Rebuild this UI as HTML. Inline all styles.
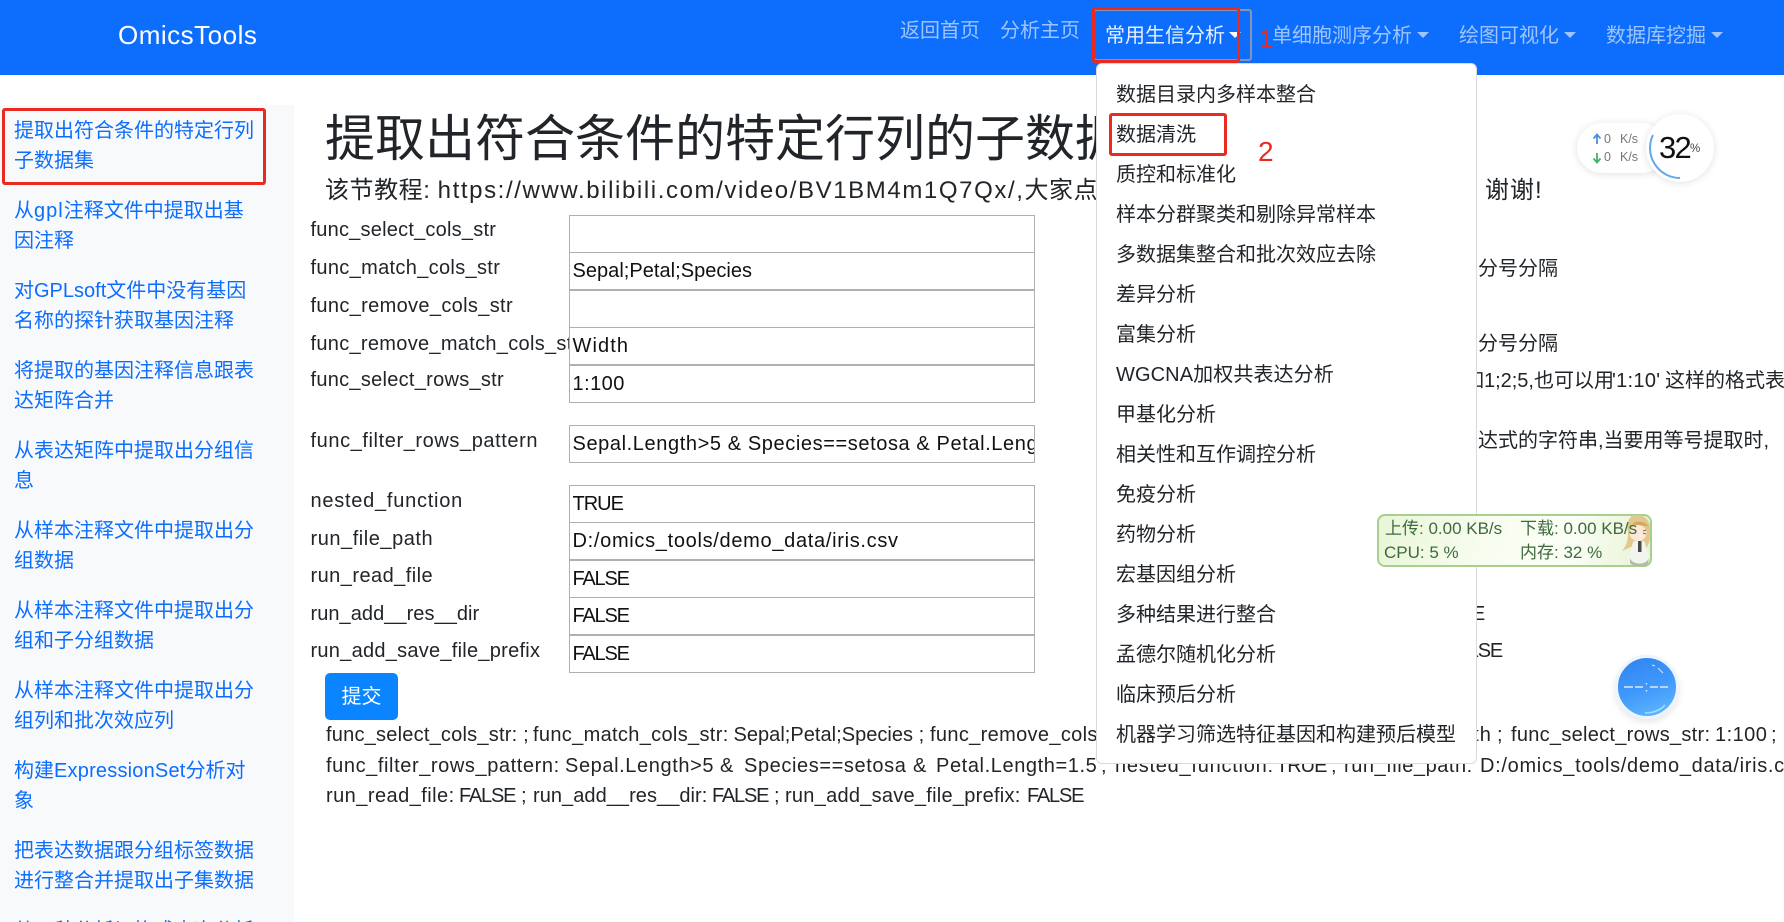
<!DOCTYPE html>
<html lang="zh-CN">
<head>
<meta charset="utf-8">
<title>OmicsTools</title>
<style>
html,body{margin:0;padding:0;width:1784px;height:922px;overflow:hidden;background:#fff}
body{position:relative;font-family:"Liberation Sans","Noto Sans CJK SC",sans-serif;font-size:20px;color:#212529}
.t{position:absolute;white-space:nowrap;height:30px;line-height:30px}
#nav{position:absolute;left:0;top:0;width:1784px;height:75px;background:#0d6efd}
.n{color:#9fc5fe}
.car{position:absolute;width:0;height:0;border-left:6px solid transparent;border-right:6px solid transparent;border-top:6px solid #9fc5fe;top:32px}
#side{position:absolute;left:0;top:105px;width:294px;height:817px;background:#f8f9fa}
.s{color:#0d6efd;left:14px}
.l{left:310.5px;color:#212529}
.v{position:absolute;box-sizing:border-box;left:569px;width:466px;height:38px;border:1px solid #b0b0b0;background:#fff;padding-left:2.5px;line-height:37px;overflow:hidden;white-space:nowrap;color:#111}
#dd{position:absolute;left:1096px;top:63px;width:381px;height:701px;box-sizing:border-box;background:#fff;border:1px solid #d8d9db;border-radius:6px}
.d{left:1116px}
.red{position:absolute;box-sizing:border-box;border:3px solid #ea2a20;border-radius:3px}
</style>
</head>
<body>
<div id="nav"></div>
<div class="t" style="left:118px;top:20px;color:#fff;font-size:26px;letter-spacing:.5px">OmicsTools</div>
<div class="t n" style="left:900px;top:16px">返回首页</div>
<div class="t n" style="left:1000px;top:16px">分析主页</div>
<div style="position:absolute;left:1093px;top:9px;width:159px;height:52px;box-sizing:border-box;border:2px solid #8496b4;border-radius:3px"></div>
<div class="t" style="left:1105px;top:21px;color:#e6f0ff">常用生信分析</div>
<div class="car" style="left:1229px;border-top-color:#fff"></div>
<div class="t n" style="left:1272px;top:21px">单细胞测序分析</div>
<div class="car" style="left:1417px"></div>
<div class="t n" style="left:1459px;top:21px">绘图可视化</div>
<div class="car" style="left:1564px"></div>
<div class="t n" style="left:1606px;top:21px">数据库挖掘</div>
<div class="car" style="left:1711px"></div>

<div id="side"></div>
<div class="t s" style="top:116px">提取出符合条件的特定行列</div>
<div class="t s" style="top:146px">子数据集</div>
<div class="t s" style="top:196px">从<span style="letter-spacing:1px">gpl</span>注释文件中提取出基</div>
<div class="t s" style="top:226px">因注释</div>
<div class="t s" style="top:276px">对GPLsoft文件中没有基因</div>
<div class="t s" style="top:306px">名称的探针获取基因注释</div>
<div class="t s" style="top:356px">将提取的基因注释信息跟表</div>
<div class="t s" style="top:386px">达矩阵合并</div>
<div class="t s" style="top:436px">从表达矩阵中提取出分组信</div>
<div class="t s" style="top:466px">息</div>
<div class="t s" style="top:516px">从样本注释文件中提取出分</div>
<div class="t s" style="top:546px">组数据</div>
<div class="t s" style="top:596px">从样本注释文件中提取出分</div>
<div class="t s" style="top:626px">组和子分组数据</div>
<div class="t s" style="top:676px">从样本注释文件中提取出分</div>
<div class="t s" style="top:706px">组列和批次效应列</div>
<div class="t s" style="top:756px">构建<span style="letter-spacing:.2px">ExpressionSet</span>分析对</div>
<div class="t s" style="top:786px">象</div>
<div class="t s" style="top:836px">把表达数据跟分组标签数据</div>
<div class="t s" style="top:866px">进行整合并提取出子集数据</div>
<div class="t s" style="top:916px">从一种分析切换成本次分析</div>
<div class="red" style="left:2px;top:108px;width:264px;height:77px"></div>

<div class="t" style="left:325px;top:102px;height:74px;line-height:74px;font-size:50px;color:#212529">提取出符合条件的特定行列的子数据集</div>
<div class="t" style="left:325px;top:176px;font-size:24px;letter-spacing:.55px">该节教程: <span style="letter-spacing:1.6px">https://www.bilibili.com/video/BV1BM4m1Q7Qx/,</span>大家点赞</div>
<div class="t" style="left:1485px;top:176px;font-size:24px;letter-spacing:1px">谢谢!</div>

<div class="t l" style="top:215px;letter-spacing:.22px">func_select_cols_str</div>
<div class="t l" style="top:253px;letter-spacing:.33px">func_match_cols_str</div>
<div class="t l" style="top:291px;letter-spacing:.34px">func_remove_cols_str</div>
<div class="t l" style="top:329px;width:258px;overflow:hidden;letter-spacing:.3px">func_remove_match_cols_str</div>
<div class="t l" style="top:365px;letter-spacing:.28px">func_select_rows_str</div>
<div class="t l" style="top:426px;letter-spacing:.59px">func_filter_rows_pattern</div>
<div class="t l" style="top:486px;letter-spacing:.75px">nested_function</div>
<div class="t l" style="top:524px;letter-spacing:.54px">run_file_path</div>
<div class="t l" style="top:561px;letter-spacing:.45px">run_read_file</div>
<div class="t l" style="top:599px;letter-spacing:.05px">run_add__res__dir</div>
<div class="t l" style="top:636px;letter-spacing:.26px">run_add_save_file_prefix</div>

<div class="v" style="top:215px"></div>
<div class="v" style="top:252px;letter-spacing:.03px">Sepal;Petal;Species</div>
<div class="v" style="top:290px"></div>
<div class="v" style="top:327px;letter-spacing:1.1px">Width</div>
<div class="v" style="top:365px;letter-spacing:.45px">1:100</div>
<div class="v" style="top:425px;letter-spacing:.6px">Sepal.Length&gt;5 &amp; Species==setosa &amp; Petal.Length=1.5</div>
<div class="v" style="top:485px;letter-spacing:-1px">TRUE</div>
<div class="v" style="top:522px;letter-spacing:.69px">D:/omics_tools/demo_data/iris.csv</div>
<div class="v" style="top:560px;letter-spacing:-1.2px">FALSE</div>
<div class="v" style="top:597px;letter-spacing:-1.2px">FALSE</div>
<div class="v" style="top:635px;letter-spacing:-1.2px">FALSE</div>

<div style="position:absolute;left:325px;top:673px;width:73px;height:47px;background:#0a84ff;border-radius:5px;color:#fff;text-align:center;line-height:49px">提交</div>

<!-- result line 1 -->
<div class="t" style="left:326px;top:720px;letter-spacing:.22px">func_select_cols_str: ;</div>
<div class="t" style="left:533px;top:720px;letter-spacing:.33px">func_match_cols_str:</div>
<div class="t" style="left:733.500px;top:720px;letter-spacing:.03px">Sepal;Petal;Species ;</div>
<div class="t" style="left:930px;top:720px;letter-spacing:.34px">func_remove_cols_str: ;</div>
<div class="t" style="right:292px;top:720px;letter-spacing:1.1px">Width</div>
<div class="t" style="left:1497px;top:720px">;</div>
<div class="t" style="left:1511px;top:720px;letter-spacing:.28px">func_select_rows_str:</div>
<div class="t" style="left:1715px;top:720px;letter-spacing:.45px">1:100</div>
<div class="t" style="left:1771px;top:720px">;</div>
<!-- result line 2 -->
<div class="t" style="left:326px;top:751px;letter-spacing:.59px">func_filter_rows_pattern:</div>
<div class="t" style="left:565px;top:751px;letter-spacing:.6px">Sepal.Length&gt;5</div>
<div class="t" style="left:720px;top:751px">&amp;</div>
<div class="t" style="left:744px;top:751px;letter-spacing:.6px">Species==setosa</div>
<div class="t" style="left:913px;top:751px">&amp;</div>
<div class="t" style="left:936px;top:751px;letter-spacing:.6px">Petal.Length=1.5</div>
<div class="t" style="left:1101px;top:751px">;</div>
<div class="t" style="left:1115px;top:751px;letter-spacing:.75px">nested_function:</div>
<div class="t" style="left:1276px;top:751px;letter-spacing:-1px">TRUE</div>
<div class="t" style="left:1331px;top:751px">;</div>
<div class="t" style="left:1344px;top:751px;letter-spacing:.54px">run_file_path:</div>
<div class="t" style="left:1480px;top:751px;letter-spacing:.69px">D:/omics_tools/demo_data/iris.csv ;</div>
<!-- result line 3 -->
<div class="t" style="left:326px;top:781px;letter-spacing:.45px">run_read_file:</div>
<div class="t" style="left:459px;top:781px;letter-spacing:-1.2px">FALSE</div>
<div class="t" style="left:521px;top:781px">;</div>
<div class="t" style="left:533px;top:781px;letter-spacing:.05px">run_add__res__dir:</div>
<div class="t" style="left:712px;top:781px;letter-spacing:-1.2px">FALSE</div>
<div class="t" style="left:774px;top:781px">;</div>
<div class="t" style="left:785px;top:781px;letter-spacing:.26px">run_add_save_file_prefix:</div>
<div class="t" style="left:1027px;top:781px;letter-spacing:-1.2px">FALSE</div>

<!-- right column help text (partly hidden by dropdown) -->
<div class="t" style="left:1478px;top:254px">分号分隔</div>
<div class="t" style="left:1478px;top:329px">分号分隔</div>
<div class="t" style="right:250px;top:366px">如1;2;5,</div>
<div class="t" style="left:1534px;top:366px">也可以用</div>
<div class="t" style="left:1612px;top:366px;letter-spacing:.3px">'1:10'</div>
<div class="t" style="left:1665px;top:366px">这样的格式表示</div>
<div class="t" style="left:1458px;top:426px">表达式的字符串,当要用等号提取时,</div>
<div class="t" style="right:300px;top:599px;letter-spacing:-1.2px">FALSE</div>
<div class="t" style="right:282px;top:636px;letter-spacing:-1.2px">FALSE</div>

<div id="dd"></div>
<div class="t d" style="top:80px">数据目录内多样本整合</div>
<div class="t d" style="top:120px">数据清洗</div>
<div class="t d" style="top:160px">质控和标准化</div>
<div class="t d" style="top:200px">样本分群聚类和剔除异常样本</div>
<div class="t d" style="top:240px">多数据集整合和批次效应去除</div>
<div class="t d" style="top:280px">差异分析</div>
<div class="t d" style="top:320px">富集分析</div>
<div class="t d" style="top:360px;letter-spacing:.1px">WGCNA加权共表达分析</div>
<div class="t d" style="top:400px">甲基化分析</div>
<div class="t d" style="top:440px">相关性和互作调控分析</div>
<div class="t d" style="top:480px">免疫分析</div>
<div class="t d" style="top:520px">药物分析</div>
<div class="t d" style="top:560px">宏基因组分析</div>
<div class="t d" style="top:600px">多种结果进行整合</div>
<div class="t d" style="top:640px">孟德尔随机化分析</div>
<div class="t d" style="top:680px">临床预后分析</div>
<div class="t d" style="top:720px">机器学习筛选特征基因和构建预后模型</div>

<div class="red" style="left:1092px;top:7px;width:148px;height:56px"></div>
<div class="red" style="left:1109px;top:113px;width:118px;height:43px"></div>
<div class="t" style="left:1259px;top:24px;color:#ea2a20;font-size:26px">1</div>
<div class="t" style="left:1258px;top:137px;color:#ea2a20;font-size:28px">2</div>

<!-- speed widget -->
<div style="position:absolute;left:1577px;top:123px;width:90px;height:50px;border-radius:25px;background:#fff;box-shadow:0 1px 8px rgba(0,0,0,.12)"></div>
<svg style="position:absolute;left:1591px;top:132px" width="12" height="32" viewBox="0 0 12 32">
<path d="M6 12V3M2.500 6.500L6 2.500L9.500 6.500" fill="none" stroke="#4a90e2" stroke-width="1.800"/>
<path d="M6 21V30M2.500 26.500L6 30.500L9.500 26.500" fill="none" stroke="#3fb56a" stroke-width="1.800"/>
</svg>
<div class="t" style="left:1604px;top:130px;height:18px;line-height:18px;font-size:12.500px;color:#777">0</div>
<div class="t" style="left:1620px;top:130px;height:18px;line-height:18px;font-size:12.500px;color:#777">K/s</div>
<div class="t" style="left:1604px;top:148px;height:18px;line-height:18px;font-size:12.500px;color:#777">0</div>
<div class="t" style="left:1620px;top:148px;height:18px;line-height:18px;font-size:12.500px;color:#777">K/s</div>
<div style="position:absolute;left:1646px;top:114px;width:68px;height:68px;border-radius:50%;background:#fff;box-shadow:0 1px 8px rgba(0,0,0,.12)"></div>
<svg style="position:absolute;left:1646px;top:114px" width="68" height="68" viewBox="0 0 68 68"><path d="M7 21A30 30 0 0 0 34 64" fill="none" stroke="#62a8ee" stroke-width="2"/></svg>
<div class="t" style="left:1659px;top:130px;height:36px;line-height:36px;font-size:31px;letter-spacing:-1.800px;color:#111">32</div>
<div class="t" style="left:1690px;top:140px;height:18px;line-height:18px;font-size:11.500px;color:#444">%</div>

<!-- green net widget -->
<div style="position:absolute;left:1377px;top:514px;width:275px;height:53px;box-sizing:border-box;border:2px solid #a6d08e;border-radius:8px;background:linear-gradient(100deg,#e9f6d8 0%,#f8fdf0 40%,#fbfef6 70%,#e6f3d4 100%)"></div>
<svg style="position:absolute;left:1618px;top:514px" width="34" height="53" viewBox="0 0 34 53">
<path d="M14 2C22-1 32 3 32 14C32 22 33 28 28 34L20 30L4 37C9 31 10 26 10 18C8 12 10 5 14 2Z" fill="#e3c88e"/>
<path d="M14 10C18 6 28 7 31 13C28 11 22 12 18 11Z" fill="#cfa962"/>
<ellipse cx="20" cy="19" rx="8.500" ry="8" fill="#fbe8d6"/>
<path d="M25 17l3-1M25 19l3 1" stroke="#6b4a2a" stroke-width=".8"/>
<path d="M15 28C18 26 24 26 27 28L29 38C33 41 31 50 23 51C15 52 10 47 12 40Z" fill="#f3f4ee"/>
<path d="M12 44C14 51 28 52 31 44L30 50C26 53 15 53 12 49Z" fill="#b5b9ad"/>
<path d="M20 27h3.500v11h-3.500z" fill="#4a4a4a"/>
</svg>
<div class="t" style="left:1385px;top:519px;height:20px;line-height:20px;font-size:17px;color:#3e6a3e">上传: 0.00 KB/s</div>
<div class="t" style="left:1520px;top:519px;height:20px;line-height:20px;font-size:17px;color:#3e6a3e">下载: 0.00 KB/s</div>
<div class="t" style="left:1384px;top:543px;height:20px;line-height:20px;font-size:17px;color:#3e6a3e">CPU: 5 %</div>
<div class="t" style="left:1520px;top:543px;height:20px;line-height:20px;font-size:17px;color:#3e6a3e">内存: 32 %</div>

<!-- blue clock -->
<div style="position:absolute;left:1615px;top:655px;width:58px;height:58px;border-radius:50%;background:linear-gradient(160deg,#2f84ef 0%,#3f97fb 50%,#62bbff 100%);border:3px solid #eef4fb;box-shadow:0 3px 7px rgba(0,0,0,.1)"></div>
<svg style="position:absolute;left:1615px;top:655px" width="64" height="64" viewBox="0 0 64 64">
<path d="M9 32h9M20 32h8M35 32h8M45 32h8M31.500 28v1.500M31.500 35v1.500" stroke="#dcecff" stroke-width="1.400" fill="none"/>
<path d="M37 10l3 1M43 13l5 5" stroke="#cfe6ff" stroke-width="1" fill="none"/>
<path d="M30 58C38 58 46 55 50 50" stroke="#a9dcff" stroke-width="1.500" fill="none"/>
</svg>
</body>
</html>
